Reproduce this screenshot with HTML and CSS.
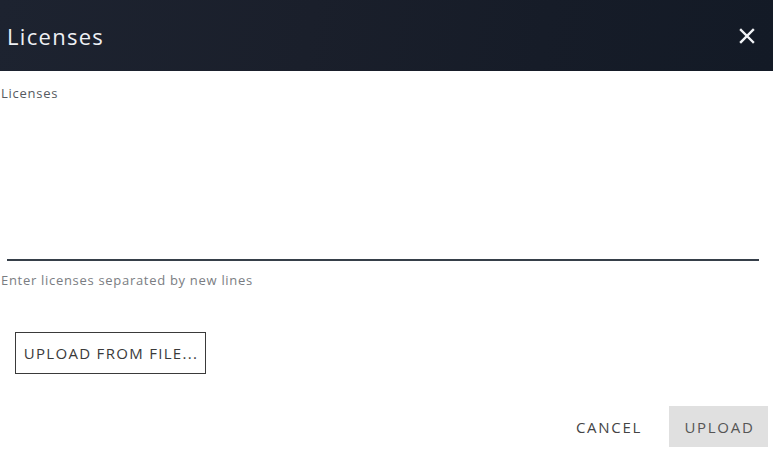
FILE: index.html
```html
<!DOCTYPE html>
<html>
<head>
<meta charset="utf-8">
<link rel="stylesheet" href="styles.css">
</head>
<body>
<div class="dialog">
  <header class="dialog-header">
    <h1 class="dialog-title">Licenses</h1>
    <button class="close-btn" aria-label="Close">
      <svg width="16" height="16" viewBox="0 0 16 16"><path d="M2 2 L14 14 M14 2 L2 14" stroke="#f2f4f7" stroke-width="2.4" stroke-linecap="square"/></svg>
    </button>
  </header>
  <main class="dialog-body">
    <label class="field-label">Licenses</label>
    <div class="textarea"></div>
    <div class="helper">Enter licenses separated by new lines</div>
    <div class="file-row">
      <button class="outline-btn">UPLOAD FROM FILE...</button>
    </div>
  </main>
  <footer class="dialog-actions">
    <button class="text-btn">CANCEL</button>
    <button class="fill-btn">UPLOAD</button>
  </footer>
</div>
</body>
</html>
```
FILE: styles.css
```css
* { box-sizing: border-box; }
html, body { margin: 0; padding: 0; background: #fff; }
body { font-family: "Open Sans", "Noto Sans", sans-serif; width: 773px; height: 453px; overflow: hidden; }
.dialog { display: flex; flex-direction: column; height: 453px; }
.dialog-header {
  height: 71px;
  background: linear-gradient(100deg, #1d2330 0%, #1a1f2b 40%, #161c28 70%, #131a26 100%);
  display: flex; align-items: center; justify-content: space-between;
  padding: 0 18px 0 7px;
}
.dialog-title { margin: 0; font-weight: 400; font-size: 22px; color: #eef0f4; letter-spacing: 1.3px; }
.close-btn { background: none; border: 0; padding: 0; display: flex; }
.dialog-body { padding: 0 14px 0 1px; display: flex; flex-direction: column; }
.field-label { font-size: 13px; color: #555a60; margin-top: 14px; line-height: 16px; letter-spacing: 0.75px; }
.textarea { height: 160px; margin-left: 6px; border-bottom: 2px solid #363f49; }
.helper { font-size: 13px; color: #7a7d82; margin-top: 11px; line-height: 16px; letter-spacing: 0.7px; }
.file-row { padding: 44px 0 0 14px; }
.outline-btn {
  font-family: inherit; background: #fff; border: 1px solid #3a3a3a; color: #3a3a3a;
  font-size: 15px; height: 42px; padding: 0 0 0 1px; letter-spacing: 1.3px; width: 191px;
}
.dialog-actions { display: flex; justify-content: flex-end; align-items: center; margin-top: 32px; padding-right: 5px; gap: 25px; }
.text-btn, .fill-btn { font-family: inherit; font-size: 15px; border: 0; color: #444; letter-spacing: 1.7px; }
.text-btn { background: none; padding: 0; width: 70px; }
.fill-btn { background: #e0e0e0; color: #555; width: 99px; height: 41px; padding: 0 0 0 2px; }
```
